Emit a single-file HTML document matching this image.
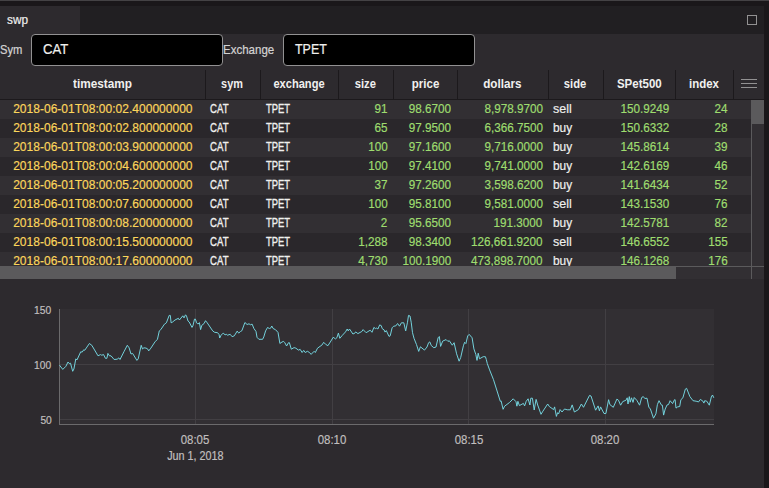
<!DOCTYPE html>
<html><head><meta charset="utf-8"><title>swp</title>
<style>
html,body{margin:0;padding:0;}
body{width:769px;height:488px;overflow:hidden;background:#1a171a;position:relative;font-family:"Liberation Sans",sans-serif;}
.abs{position:absolute;}
.t{position:absolute;white-space:pre;line-height:16px;font-family:"Liberation Sans",sans-serif;}
.panel{left:0;top:6px;width:764px;height:482px;background:#2d2a2e;}
.tabbar{left:0;top:6px;width:764px;height:28px;background:#211f22;}
.tab{left:0;top:6px;width:80px;height:28px;background:#2d2a2e;}
.inp{box-sizing:border-box;height:32px;top:34px;width:192px;background:#000;border:1px solid #929192;border-radius:4px;}
.grid{left:0;top:67px;width:764px;height:212px;overflow:hidden;}
.row{left:0;width:751px;height:19px;}
.sep{top:70px;width:1px;height:29px;background:#1c191c;}
</style></head><body>
<div class="abs" style="left:0;top:0;width:769px;height:1px;background:#444245"></div>
<div class="abs panel"></div>
<div class="abs tabbar"></div>
<div class="abs tab"></div>
<div class="abs" style="left:747px;top:15px;width:10px;height:10px;box-sizing:border-box;border:1px solid #929192"></div>
<div class="abs inp" style="left:31px"></div>
<div class="abs inp" style="left:283px"></div>

<div class="abs row" style="top:100px;height:19px;background:#322f33"></div>
<div class="abs row" style="top:119px;height:19px;background:#2a272b"></div>
<div class="abs row" style="top:138px;height:19px;background:#322f33"></div>
<div class="abs row" style="top:157px;height:19px;background:#2a272b"></div>
<div class="abs row" style="top:176px;height:19px;background:#322f33"></div>
<div class="abs row" style="top:195px;height:19px;background:#2a272b"></div>
<div class="abs row" style="top:214px;height:19px;background:#322f33"></div>
<div class="abs row" style="top:233px;height:19px;background:#2a272b"></div>
<div class="abs row" style="top:252px;height:14px;background:#322f33"></div>
<div class="abs" style="left:0;top:99px;width:764px;height:1px;background:#1c191c"></div>
<div class="abs sep" style="left:205px"></div>
<div class="abs sep" style="left:260px"></div>
<div class="abs sep" style="left:338px"></div>
<div class="abs sep" style="left:393px"></div>
<div class="abs sep" style="left:457px"></div>
<div class="abs sep" style="left:548px"></div>
<div class="abs sep" style="left:603px"></div>
<div class="abs sep" style="left:675px"></div>
<div class="abs sep" style="left:733px"></div>
<div class="abs" style="left:741px;top:79px;width:16px;height:1px;background:#929192"></div>
<div class="abs" style="left:741px;top:83px;width:16px;height:1px;background:#929192"></div>
<div class="abs" style="left:741px;top:87px;width:16px;height:1px;background:#929192"></div>
<div class="abs" style="left:751px;top:100px;width:13px;height:167px;background:#322f33"></div>
<div class="abs" style="left:752px;top:100px;width:12px;height:24px;background:#5b5a5c"></div>
<div class="abs" style="left:0;top:267px;width:764px;height:12px;background:#322f33"></div>
<div class="abs" style="left:0;top:266px;width:764px;height:1px;background:#5b5a5c"></div>
<div class="abs" style="left:0;top:267px;width:676px;height:12px;background:#5b5a5c"></div>
<div class="abs" style="left:751px;top:100px;width:1px;height:179px;background:#5b5a5c"></div>
<div class="abs" style="left:0;top:0;width:769px;height:266px;overflow:hidden">
<span class="t" style="left:7.00px;transform-origin:0 0;top:12.00px;font-size:13px;-webkit-text-stroke:0.19px;color:#f0f0ee;transform:scaleX(0.9081)">swp</span>
<span class="t" style="left:-0.30px;transform-origin:0 0;top:41.50px;font-size:13px;-webkit-text-stroke:0.23px;color:#d4d3d3;transform:scaleX(0.8615)">Sym</span>
<span class="t" style="left:43.20px;transform-origin:0 0;top:41.17px;font-size:14px;-webkit-text-stroke:0.17px;color:#f0f0ee;transform:scaleX(0.9418)">CAT</span>
<span class="t" style="left:223.40px;transform-origin:0 0;top:41.50px;font-size:13px;-webkit-text-stroke:0.21px;color:#d4d3d3;transform:scaleX(0.8854)">Exchange</span>
<span class="t" style="left:295.00px;transform-origin:0 0;top:41.17px;font-size:14px;-webkit-text-stroke:0.21px;color:#f0f0ee;transform:scaleX(0.8887)">TPET</span>
<span class="t" style="left:70.08px;transform-origin:50% 0;top:75.50px;font-size:13px;font-weight:700;color:#f0f0ee;transform:scaleX(0.9073)">timestamp</span>
<span class="t" style="left:219.48px;transform-origin:50% 0;top:75.50px;font-size:13px;font-weight:700;color:#f0f0ee;transform:scaleX(0.8375)">sym</span>
<span class="t" style="left:269.21px;transform-origin:50% 0;top:75.50px;font-size:13px;font-weight:700;color:#f0f0ee;transform:scaleX(0.8536)">exchange</span>
<span class="t" style="left:353.21px;transform-origin:50% 0;top:75.50px;font-size:13px;font-weight:700;color:#f0f0ee;transform:scaleX(0.8626)">size</span>
<span class="t" style="left:409.86px;transform-origin:50% 0;top:75.50px;font-size:13px;font-weight:700;color:#f0f0ee;transform:scaleX(0.8849)">price</span>
<span class="t" style="left:481.49px;transform-origin:50% 0;top:75.50px;font-size:13px;font-weight:700;color:#f0f0ee;transform:scaleX(0.8985)">dollars</span>
<span class="t" style="left:562.29px;transform-origin:50% 0;top:75.50px;font-size:13px;font-weight:700;color:#f0f0ee;transform:scaleX(0.8610)">side</span>
<span class="t" style="left:613.50px;transform-origin:50% 0;top:75.50px;font-size:13px;font-weight:700;color:#f0f0ee;transform:scaleX(0.8855)">SPet500</span>
<span class="t" style="left:687.22px;transform-origin:50% 0;top:75.50px;font-size:13px;font-weight:700;color:#f0f0ee;transform:scaleX(0.8832)">index</span>
<span class="t" style="left:5.78px;transform-origin:50% 0;top:100.70px;font-size:13px;-webkit-text-stroke:0.18px;color:#fcd65b;transform:scaleX(0.9260)">2018-06-01T08:00:02.400000000</span>
<span class="t" style="left:210.30px;transform-origin:0 0;top:100.70px;font-size:13px;-webkit-text-stroke:0.33px;color:#f0f0ee;transform:scaleX(0.7386)">CAT</span>
<span class="t" style="left:265.60px;transform-origin:0 0;top:100.70px;font-size:13px;-webkit-text-stroke:0.34px;color:#f0f0ee;transform:scaleX(0.7221)">TPET</span>
<span class="t" style="right:381.30px;transform-origin:100% 0;top:100.70px;font-size:13px;-webkit-text-stroke:0.20px;color:#9edc6f;transform:scaleX(0.8985)">91</span>
<span class="t" style="right:317.60px;transform-origin:100% 0;top:100.70px;font-size:13px;-webkit-text-stroke:0.20px;color:#9edc6f;transform:scaleX(0.9000)">98.6700</span>
<span class="t" style="right:226.30px;transform-origin:100% 0;top:100.70px;font-size:13px;-webkit-text-stroke:0.20px;color:#9edc6f;transform:scaleX(0.9005)">8,978.9700</span>
<span class="t" style="left:553.20px;transform-origin:0 0;top:100.70px;font-size:13px;-webkit-text-stroke:0.15px;color:#f0f0ee;transform:scaleX(0.9633)">sell</span>
<span class="t" style="right:99.70px;transform-origin:100% 0;top:100.70px;font-size:13px;-webkit-text-stroke:0.20px;color:#9edc6f;transform:scaleX(0.8998)">150.9249</span>
<span class="t" style="right:41.40px;transform-origin:100% 0;top:100.70px;font-size:13px;-webkit-text-stroke:0.20px;color:#9edc6f;transform:scaleX(0.8985)">24</span>
<span class="t" style="left:5.78px;transform-origin:50% 0;top:119.70px;font-size:13px;-webkit-text-stroke:0.18px;color:#fcd65b;transform:scaleX(0.9260)">2018-06-01T08:00:02.800000000</span>
<span class="t" style="left:210.30px;transform-origin:0 0;top:119.70px;font-size:13px;-webkit-text-stroke:0.33px;color:#f0f0ee;transform:scaleX(0.7386)">CAT</span>
<span class="t" style="left:265.60px;transform-origin:0 0;top:119.70px;font-size:13px;-webkit-text-stroke:0.34px;color:#f0f0ee;transform:scaleX(0.7221)">TPET</span>
<span class="t" style="right:381.30px;transform-origin:100% 0;top:119.70px;font-size:13px;-webkit-text-stroke:0.20px;color:#9edc6f;transform:scaleX(0.8985)">65</span>
<span class="t" style="right:317.60px;transform-origin:100% 0;top:119.70px;font-size:13px;-webkit-text-stroke:0.20px;color:#9edc6f;transform:scaleX(0.9000)">97.9500</span>
<span class="t" style="right:226.30px;transform-origin:100% 0;top:119.70px;font-size:13px;-webkit-text-stroke:0.20px;color:#9edc6f;transform:scaleX(0.9005)">6,366.7500</span>
<span class="t" style="left:553.20px;transform-origin:0 0;top:119.70px;font-size:13px;-webkit-text-stroke:0.19px;color:#f0f0ee;transform:scaleX(0.9156)">buy</span>
<span class="t" style="right:99.70px;transform-origin:100% 0;top:119.70px;font-size:13px;-webkit-text-stroke:0.20px;color:#9edc6f;transform:scaleX(0.8998)">150.6332</span>
<span class="t" style="right:41.40px;transform-origin:100% 0;top:119.70px;font-size:13px;-webkit-text-stroke:0.20px;color:#9edc6f;transform:scaleX(0.8985)">28</span>
<span class="t" style="left:5.78px;transform-origin:50% 0;top:138.70px;font-size:13px;-webkit-text-stroke:0.18px;color:#fcd65b;transform:scaleX(0.9260)">2018-06-01T08:00:03.900000000</span>
<span class="t" style="left:210.30px;transform-origin:0 0;top:138.70px;font-size:13px;-webkit-text-stroke:0.33px;color:#f0f0ee;transform:scaleX(0.7386)">CAT</span>
<span class="t" style="left:265.60px;transform-origin:0 0;top:138.70px;font-size:13px;-webkit-text-stroke:0.34px;color:#f0f0ee;transform:scaleX(0.7221)">TPET</span>
<span class="t" style="right:381.30px;transform-origin:100% 0;top:138.70px;font-size:13px;-webkit-text-stroke:0.20px;color:#9edc6f;transform:scaleX(0.8985)">100</span>
<span class="t" style="right:317.60px;transform-origin:100% 0;top:138.70px;font-size:13px;-webkit-text-stroke:0.20px;color:#9edc6f;transform:scaleX(0.9000)">97.1600</span>
<span class="t" style="right:226.30px;transform-origin:100% 0;top:138.70px;font-size:13px;-webkit-text-stroke:0.20px;color:#9edc6f;transform:scaleX(0.9005)">9,716.0000</span>
<span class="t" style="left:553.20px;transform-origin:0 0;top:138.70px;font-size:13px;-webkit-text-stroke:0.19px;color:#f0f0ee;transform:scaleX(0.9156)">buy</span>
<span class="t" style="right:99.70px;transform-origin:100% 0;top:138.70px;font-size:13px;-webkit-text-stroke:0.20px;color:#9edc6f;transform:scaleX(0.8998)">145.8614</span>
<span class="t" style="right:41.40px;transform-origin:100% 0;top:138.70px;font-size:13px;-webkit-text-stroke:0.20px;color:#9edc6f;transform:scaleX(0.8985)">39</span>
<span class="t" style="left:5.78px;transform-origin:50% 0;top:157.70px;font-size:13px;-webkit-text-stroke:0.18px;color:#fcd65b;transform:scaleX(0.9260)">2018-06-01T08:00:04.600000000</span>
<span class="t" style="left:210.30px;transform-origin:0 0;top:157.70px;font-size:13px;-webkit-text-stroke:0.33px;color:#f0f0ee;transform:scaleX(0.7386)">CAT</span>
<span class="t" style="left:265.60px;transform-origin:0 0;top:157.70px;font-size:13px;-webkit-text-stroke:0.34px;color:#f0f0ee;transform:scaleX(0.7221)">TPET</span>
<span class="t" style="right:381.30px;transform-origin:100% 0;top:157.70px;font-size:13px;-webkit-text-stroke:0.20px;color:#9edc6f;transform:scaleX(0.8985)">100</span>
<span class="t" style="right:317.60px;transform-origin:100% 0;top:157.70px;font-size:13px;-webkit-text-stroke:0.20px;color:#9edc6f;transform:scaleX(0.9000)">97.4100</span>
<span class="t" style="right:226.30px;transform-origin:100% 0;top:157.70px;font-size:13px;-webkit-text-stroke:0.20px;color:#9edc6f;transform:scaleX(0.9005)">9,741.0000</span>
<span class="t" style="left:553.20px;transform-origin:0 0;top:157.70px;font-size:13px;-webkit-text-stroke:0.19px;color:#f0f0ee;transform:scaleX(0.9156)">buy</span>
<span class="t" style="right:99.70px;transform-origin:100% 0;top:157.70px;font-size:13px;-webkit-text-stroke:0.20px;color:#9edc6f;transform:scaleX(0.8998)">142.6169</span>
<span class="t" style="right:41.40px;transform-origin:100% 0;top:157.70px;font-size:13px;-webkit-text-stroke:0.20px;color:#9edc6f;transform:scaleX(0.8985)">46</span>
<span class="t" style="left:5.78px;transform-origin:50% 0;top:176.70px;font-size:13px;-webkit-text-stroke:0.18px;color:#fcd65b;transform:scaleX(0.9260)">2018-06-01T08:00:05.200000000</span>
<span class="t" style="left:210.30px;transform-origin:0 0;top:176.70px;font-size:13px;-webkit-text-stroke:0.33px;color:#f0f0ee;transform:scaleX(0.7386)">CAT</span>
<span class="t" style="left:265.60px;transform-origin:0 0;top:176.70px;font-size:13px;-webkit-text-stroke:0.34px;color:#f0f0ee;transform:scaleX(0.7221)">TPET</span>
<span class="t" style="right:381.30px;transform-origin:100% 0;top:176.70px;font-size:13px;-webkit-text-stroke:0.20px;color:#9edc6f;transform:scaleX(0.8985)">37</span>
<span class="t" style="right:317.60px;transform-origin:100% 0;top:176.70px;font-size:13px;-webkit-text-stroke:0.20px;color:#9edc6f;transform:scaleX(0.9000)">97.2600</span>
<span class="t" style="right:226.30px;transform-origin:100% 0;top:176.70px;font-size:13px;-webkit-text-stroke:0.20px;color:#9edc6f;transform:scaleX(0.9005)">3,598.6200</span>
<span class="t" style="left:553.20px;transform-origin:0 0;top:176.70px;font-size:13px;-webkit-text-stroke:0.19px;color:#f0f0ee;transform:scaleX(0.9156)">buy</span>
<span class="t" style="right:99.70px;transform-origin:100% 0;top:176.70px;font-size:13px;-webkit-text-stroke:0.20px;color:#9edc6f;transform:scaleX(0.8998)">141.6434</span>
<span class="t" style="right:41.40px;transform-origin:100% 0;top:176.70px;font-size:13px;-webkit-text-stroke:0.20px;color:#9edc6f;transform:scaleX(0.8985)">52</span>
<span class="t" style="left:5.78px;transform-origin:50% 0;top:195.70px;font-size:13px;-webkit-text-stroke:0.18px;color:#fcd65b;transform:scaleX(0.9260)">2018-06-01T08:00:07.600000000</span>
<span class="t" style="left:210.30px;transform-origin:0 0;top:195.70px;font-size:13px;-webkit-text-stroke:0.33px;color:#f0f0ee;transform:scaleX(0.7386)">CAT</span>
<span class="t" style="left:265.60px;transform-origin:0 0;top:195.70px;font-size:13px;-webkit-text-stroke:0.34px;color:#f0f0ee;transform:scaleX(0.7221)">TPET</span>
<span class="t" style="right:381.30px;transform-origin:100% 0;top:195.70px;font-size:13px;-webkit-text-stroke:0.20px;color:#9edc6f;transform:scaleX(0.8985)">100</span>
<span class="t" style="right:317.60px;transform-origin:100% 0;top:195.70px;font-size:13px;-webkit-text-stroke:0.20px;color:#9edc6f;transform:scaleX(0.9000)">95.8100</span>
<span class="t" style="right:226.30px;transform-origin:100% 0;top:195.70px;font-size:13px;-webkit-text-stroke:0.20px;color:#9edc6f;transform:scaleX(0.9005)">9,581.0000</span>
<span class="t" style="left:553.20px;transform-origin:0 0;top:195.70px;font-size:13px;-webkit-text-stroke:0.15px;color:#f0f0ee;transform:scaleX(0.9633)">sell</span>
<span class="t" style="right:99.70px;transform-origin:100% 0;top:195.70px;font-size:13px;-webkit-text-stroke:0.20px;color:#9edc6f;transform:scaleX(0.8998)">143.1530</span>
<span class="t" style="right:41.40px;transform-origin:100% 0;top:195.70px;font-size:13px;-webkit-text-stroke:0.20px;color:#9edc6f;transform:scaleX(0.8985)">76</span>
<span class="t" style="left:5.78px;transform-origin:50% 0;top:214.70px;font-size:13px;-webkit-text-stroke:0.18px;color:#fcd65b;transform:scaleX(0.9260)">2018-06-01T08:00:08.200000000</span>
<span class="t" style="left:210.30px;transform-origin:0 0;top:214.70px;font-size:13px;-webkit-text-stroke:0.33px;color:#f0f0ee;transform:scaleX(0.7386)">CAT</span>
<span class="t" style="left:265.60px;transform-origin:0 0;top:214.70px;font-size:13px;-webkit-text-stroke:0.34px;color:#f0f0ee;transform:scaleX(0.7221)">TPET</span>
<span class="t" style="right:381.30px;transform-origin:100% 0;top:214.70px;font-size:13px;-webkit-text-stroke:0.20px;color:#9edc6f;transform:scaleX(0.8985)">2</span>
<span class="t" style="right:317.60px;transform-origin:100% 0;top:214.70px;font-size:13px;-webkit-text-stroke:0.20px;color:#9edc6f;transform:scaleX(0.9000)">95.6500</span>
<span class="t" style="right:226.30px;transform-origin:100% 0;top:214.70px;font-size:13px;-webkit-text-stroke:0.20px;color:#9edc6f;transform:scaleX(0.8998)">191.3000</span>
<span class="t" style="left:553.20px;transform-origin:0 0;top:214.70px;font-size:13px;-webkit-text-stroke:0.19px;color:#f0f0ee;transform:scaleX(0.9156)">buy</span>
<span class="t" style="right:99.70px;transform-origin:100% 0;top:214.70px;font-size:13px;-webkit-text-stroke:0.20px;color:#9edc6f;transform:scaleX(0.8998)">142.5781</span>
<span class="t" style="right:41.40px;transform-origin:100% 0;top:214.70px;font-size:13px;-webkit-text-stroke:0.20px;color:#9edc6f;transform:scaleX(0.8985)">82</span>
<span class="t" style="left:5.78px;transform-origin:50% 0;top:233.70px;font-size:13px;-webkit-text-stroke:0.18px;color:#fcd65b;transform:scaleX(0.9260)">2018-06-01T08:00:15.500000000</span>
<span class="t" style="left:210.30px;transform-origin:0 0;top:233.70px;font-size:13px;-webkit-text-stroke:0.33px;color:#f0f0ee;transform:scaleX(0.7386)">CAT</span>
<span class="t" style="left:265.60px;transform-origin:0 0;top:233.70px;font-size:13px;-webkit-text-stroke:0.34px;color:#f0f0ee;transform:scaleX(0.7221)">TPET</span>
<span class="t" style="right:381.30px;transform-origin:100% 0;top:233.70px;font-size:13px;-webkit-text-stroke:0.20px;color:#9edc6f;transform:scaleX(0.9002)">1,288</span>
<span class="t" style="right:317.60px;transform-origin:100% 0;top:233.70px;font-size:13px;-webkit-text-stroke:0.20px;color:#9edc6f;transform:scaleX(0.9000)">98.3400</span>
<span class="t" style="right:226.30px;transform-origin:100% 0;top:233.70px;font-size:13px;-webkit-text-stroke:0.20px;color:#9edc6f;transform:scaleX(0.9003)">126,661.9200</span>
<span class="t" style="left:553.20px;transform-origin:0 0;top:233.70px;font-size:13px;-webkit-text-stroke:0.15px;color:#f0f0ee;transform:scaleX(0.9633)">sell</span>
<span class="t" style="right:99.70px;transform-origin:100% 0;top:233.70px;font-size:13px;-webkit-text-stroke:0.20px;color:#9edc6f;transform:scaleX(0.8998)">146.6552</span>
<span class="t" style="right:41.40px;transform-origin:100% 0;top:233.70px;font-size:13px;-webkit-text-stroke:0.20px;color:#9edc6f;transform:scaleX(0.8985)">155</span>
<span class="t" style="left:5.78px;transform-origin:50% 0;top:252.70px;font-size:13px;-webkit-text-stroke:0.18px;color:#fcd65b;transform:scaleX(0.9260)">2018-06-01T08:00:17.600000000</span>
<span class="t" style="left:210.30px;transform-origin:0 0;top:252.70px;font-size:13px;-webkit-text-stroke:0.33px;color:#f0f0ee;transform:scaleX(0.7386)">CAT</span>
<span class="t" style="left:265.60px;transform-origin:0 0;top:252.70px;font-size:13px;-webkit-text-stroke:0.34px;color:#f0f0ee;transform:scaleX(0.7221)">TPET</span>
<span class="t" style="right:381.30px;transform-origin:100% 0;top:252.70px;font-size:13px;-webkit-text-stroke:0.20px;color:#9edc6f;transform:scaleX(0.9002)">4,730</span>
<span class="t" style="right:317.60px;transform-origin:100% 0;top:252.70px;font-size:13px;-webkit-text-stroke:0.20px;color:#9edc6f;transform:scaleX(0.8998)">100.1900</span>
<span class="t" style="right:226.30px;transform-origin:100% 0;top:252.70px;font-size:13px;-webkit-text-stroke:0.20px;color:#9edc6f;transform:scaleX(0.9003)">473,898.7000</span>
<span class="t" style="left:553.20px;transform-origin:0 0;top:252.70px;font-size:13px;-webkit-text-stroke:0.19px;color:#f0f0ee;transform:scaleX(0.9156)">buy</span>
<span class="t" style="right:99.70px;transform-origin:100% 0;top:252.70px;font-size:13px;-webkit-text-stroke:0.20px;color:#9edc6f;transform:scaleX(0.8998)">146.1268</span>
<span class="t" style="right:41.40px;transform-origin:100% 0;top:252.70px;font-size:13px;-webkit-text-stroke:0.20px;color:#9edc6f;transform:scaleX(0.8985)">176</span>
</div>
<svg class="abs" style="left:0;top:280px" width="764" height="208" viewBox="0 280 764 208">
<rect x="59" y="309" width="655" height="116" fill="#322f33"/>
<g stroke="#423f43" stroke-width="1" shape-rendering="crispEdges">
<line x1="195.5" y1="309" x2="195.5" y2="424"/><line x1="332.5" y1="309" x2="332.5" y2="424"/><line x1="468.5" y1="309" x2="468.5" y2="424"/><line x1="605.5" y1="309" x2="605.5" y2="424"/>
<line x1="59" y1="364.5" x2="714" y2="364.5"/><line x1="59" y1="419.5" x2="714" y2="419.5"/>
</g>
<g stroke="#6b6a6c" stroke-width="1" shape-rendering="crispEdges">
<line x1="59.5" y1="309" x2="59.5" y2="425"/><line x1="59" y1="424.5" x2="714" y2="424.5"/>
</g>
<path d="M59.6,365.2 L60.1,366.0 L62.8,369.4 L65.9,366.3 L68.0,362.0 L69.3,363.6 L70.5,363.2 L72.7,371.3 L73.9,369.0 L75.8,358.9 L77.0,359.9 L80.7,351.8 L82.2,352.1 L83.8,349.7 L84.7,350.3 L89.4,343.5 L91.8,345.3 L98.0,355.8 L100.5,354.6 L101.7,355.2 L103.6,354.6 L105.4,358.3 L106.9,358.3 L107.9,353.4 L109.4,355.8 L111.0,355.8 L114.1,359.5 L117.2,359.2 L118.8,357.9 L120.0,359.5 L123.9,351.8 L127.3,345.3 L129.1,347.8 L131.0,354.0 L132.6,353.4 L136.9,360.4 L138.2,358.9 L141.2,345.3 L142.5,349.0 L143.9,347.8 L146.0,348.1 L147.5,348.8 L148.7,350.9 L150.9,348.1 L155.3,341.4 L157.4,339.5 L159.3,330.9 L160.8,329.6 L164.5,324.1 L166.4,322.8 L169.2,315.4 L170.3,315.4 L171.1,322.8 L172.6,322.0 L175.0,320.0 L178.4,318.3 L179.4,320.0 L182.8,315.8 L184.0,317.9 L185.5,314.8 L186.5,316.0 L188.0,321.0 L189.2,322.0 L192.0,327.4 L192.9,325.9 L194.5,319.1 L195.4,319.1 L196.6,322.8 L197.9,324.1 L199.4,322.6 L200.6,329.6 L201.8,325.3 L204.1,323.5 L205.5,320.7 L207.2,322.8 L212.7,330.9 L214.6,332.3 L217.6,332.7 L219.1,334.6 L219.7,338.0 L221.1,335.2 L223.2,333.1 L225.1,334.8 L226.3,334.3 L227.5,335.2 L230.2,334.3 L232.1,336.7 L234.3,335.8 L237.2,331.1 L238.7,333.1 L240.5,331.5 L241.9,330.7 L244.9,322.5 L247.1,324.5 L249.0,323.8 L250.6,324.8 L252.1,324.1 L253.9,328.5 L256.0,331.5 L257.0,337.3 L258.9,339.3 L262.6,339.3 L263.8,336.9 L265.6,330.9 L267.5,327.5 L269.4,328.5 L270.6,328.2 L271.8,326.0 L273.1,328.5 L275.5,329.7 L278.0,332.4 L279.9,343.5 L282.0,342.0 L283.6,341.4 L284.8,342.7 L286.6,346.0 L288.5,342.7 L289.4,342.7 L291.3,349.2 L294.1,347.6 L295.9,348.2 L298.4,350.1 L300.2,349.4 L302.1,352.5 L303.7,350.4 L305.2,352.5 L307.4,351.3 L309.5,352.5 L311.1,354.4 L314.1,351.3 L315.3,352.5 L317.5,348.2 L320.0,346.4 L321.9,345.1 L323.7,342.3 L325.6,344.3 L327.9,345.7 L330.3,342.0 L333.2,337.3 L335.6,338.9 L336.9,337.7 L338.4,333.1 L339.8,338.3 L342.1,335.6 L345.5,331.9 L347.2,329.0 L348.2,330.9 L349.5,329.0 L352.9,334.0 L354.7,333.3 L355.6,331.9 L357.9,333.6 L361.8,331.5 L363.1,329.6 L366.1,332.7 L370.2,330.2 L372.0,332.3 L373.9,327.4 L375.4,328.6 L376.7,328.1 L377.9,329.0 L379.7,324.9 L381.3,325.7 L382.2,328.6 L384.1,329.9 L385.0,332.1 L386.3,330.6 L389.0,336.4 L390.2,335.8 L392.1,327.8 L393.7,326.2 L395.8,325.9 L397.6,323.5 L399.5,326.2 L401.4,322.8 L403.8,322.8 L405.7,330.9 L407.5,322.2 L408.5,315.4 L410.0,316.0 L411.2,322.2 L412.5,332.7 L414.0,338.3 L416.5,344.6 L418.7,351.4 L420.4,346.8 L424.5,350.1 L427.0,347.0 L428.6,342.7 L429.8,341.9 L431.3,345.6 L433.8,347.7 L436.0,347.0 L438.1,337.8 L439.3,336.5 L440.6,346.4 L442.7,341.1 L446.1,339.6 L448.0,341.5 L449.2,340.6 L452.3,345.2 L454.1,342.7 L456.6,353.8 L459.1,361.2 L460.7,357.5 L463.4,345.8 L464.6,342.3 L465.9,343.6 L467.7,335.9 L469.2,334.4 L472.1,337.8 L473.9,348.9 L475.8,354.4 L477.0,360.4 L478.2,353.2 L479.5,358.8 L483.2,356.7 L485.4,356.7 L486.3,359.5 L487.3,363.6 L489.6,369.9 L493.5,379.7 L500.3,401.3 L501.1,400.9 L503.1,409.3 L504.6,406.2 L509.5,402.5 L513.2,398.8 L516.0,401.7 L516.9,406.2 L517.9,401.3 L519.4,405.6 L523.4,403.4 L524.6,405.9 L526.2,401.3 L528.1,398.8 L529.9,405.0 L530.8,398.2 L532.4,398.2 L534.2,410.0 L536.1,399.4 L537.7,405.0 L541.0,414.3 L542.9,411.2 L547.7,404.0 L549.3,406.5 L553.6,409.6 L554.6,406.9 L556.4,416.4 L557.6,412.7 L558.6,413.9 L560.1,409.6 L562.0,412.0 L564.5,409.0 L567.2,409.8 L570.3,409.8 L572.2,404.9 L574.4,412.0 L578.4,409.6 L581.4,404.0 L583.5,407.3 L589.5,395.4 L591.0,396.0 L595.6,410.2 L598.1,405.9 L599.4,410.8 L600.6,406.9 L604.0,413.5 L605.9,413.5 L608.6,399.7 L609.9,404.6 L613.3,407.3 L616.9,399.1 L618.5,400.3 L620.6,405.2 L622.8,401.5 L625.9,400.3 L627.2,397.8 L628.0,404.0 L629.3,396.6 L630.2,402.2 L631.5,397.8 L633.0,402.4 L634.2,397.5 L636.8,400.3 L639.6,405.2 L641.7,397.5 L643.3,396.6 L644.8,398.5 L647.0,398.2 L648.8,407.1 L650.4,409.0 L653.5,418.2 L655.9,413.9 L657.4,404.6 L659.0,400.7 L661.5,405.2 L662.4,405.2 L663.6,415.1 L665.2,409.0 L667.1,404.9 L668.5,404.6 L670.1,400.7 L672.6,403.6 L674.5,399.7 L675.1,399.7 L676.0,408.1 L677.6,406.9 L679.7,406.5 L680.9,399.7 L682.9,397.8 L685.3,389.2 L686.6,388.3 L689.9,396.6 L693.0,400.7 L696.1,401.2 L698.6,401.9 L700.4,399.4 L702.9,401.2 L703.9,403.1 L704.7,400.7 L706.8,401.2 L709.3,405.2 L711.3,397.0 L712.5,395.0 L713.8,397.8" fill="none" stroke="#76d9e4" stroke-width="0.95" stroke-linejoin="round"/>
</svg>
<span class="t" style="right:717.40px;transform-origin:100% 0;top:301.70px;font-size:11.5px;-webkit-text-stroke:0.21px;color:#c0bfbf;transform:scaleX(0.8912)">150</span>
<span class="t" style="right:717.40px;transform-origin:100% 0;top:356.60px;font-size:11.5px;-webkit-text-stroke:0.21px;color:#c0bfbf;transform:scaleX(0.8912)">100</span>
<span class="t" style="right:717.40px;transform-origin:100% 0;top:411.60px;font-size:11.5px;-webkit-text-stroke:0.21px;color:#c0bfbf;transform:scaleX(0.8908)">50</span>
<span class="t" style="left:180.38px;transform-origin:50% 0;top:432.03px;font-size:12px;-webkit-text-stroke:0.16px;color:#c0bfbf;transform:scaleX(0.9523)">08:05</span>
<span class="t" style="left:317.28px;transform-origin:50% 0;top:432.03px;font-size:12px;-webkit-text-stroke:0.16px;color:#c0bfbf;transform:scaleX(0.9523)">08:10</span>
<span class="t" style="left:453.78px;transform-origin:50% 0;top:432.03px;font-size:12px;-webkit-text-stroke:0.16px;color:#c0bfbf;transform:scaleX(0.9523)">08:15</span>
<span class="t" style="left:590.48px;transform-origin:50% 0;top:432.03px;font-size:12px;-webkit-text-stroke:0.16px;color:#c0bfbf;transform:scaleX(0.9523)">08:20</span>
<span class="t" style="left:164.14px;transform-origin:50% 0;top:448.03px;font-size:12px;-webkit-text-stroke:0.20px;color:#c0bfbf;transform:scaleX(0.8993)">Jun 1, 2018</span>
</body></html>
